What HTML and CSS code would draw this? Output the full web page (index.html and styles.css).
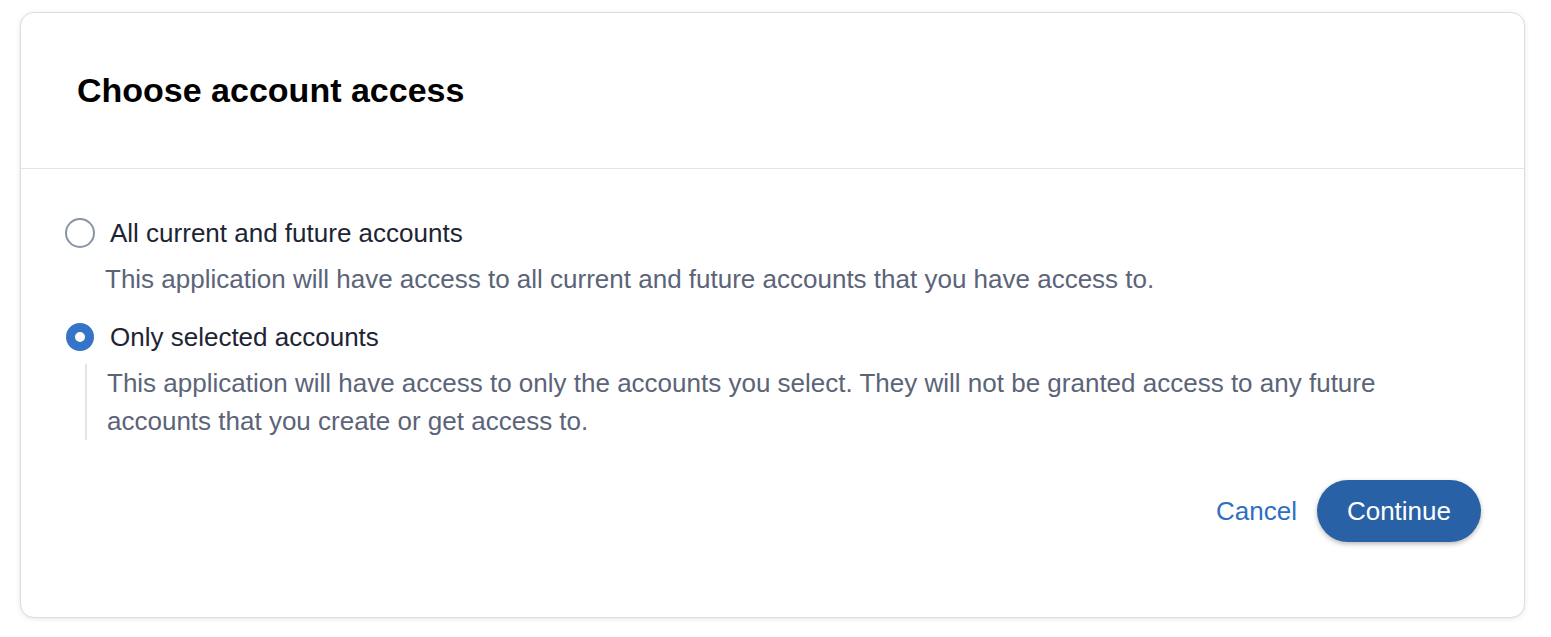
FILE: index.html
```html
<!DOCTYPE html>
<html lang="en">
<head>
<meta charset="utf-8">
<title>Choose account access</title>
<link rel="stylesheet" href="styles.css">
</head>
<body>
<div class="page">
  <div class="card">
    <div class="card-header">
      <h1 class="title">Choose account access</h1>
    </div>
    <div class="card-body">
      <div class="options">
        <div class="option">
          <label class="option-label">
            <span class="radio"></span>
            <span class="label-text">All current and future accounts</span>
          </label>
          <div class="desc">This application will have access to all current and future accounts that you have access to.</div>
        </div>
        <div class="option">
          <label class="option-label">
            <span class="radio checked"></span>
            <span class="label-text">Only selected accounts</span>
          </label>
          <div class="desc desc-active">This application will have access to only the accounts you select. They will not be granted access to any future accounts that you create or get access to.</div>
        </div>
      </div>
      <div class="actions">
        <button class="btn-link" type="button">Cancel</button>
        <button class="btn-primary" type="button">Continue</button>
      </div>
    </div>
  </div>
</div>
</body>
</html>
```

FILE: styles.css
```css
* { box-sizing: border-box; }
html, body {
  margin: 0;
  padding: 0;
  background: #ffffff;
  font-family: "Liberation Sans", Arial, Helvetica, sans-serif;
}
.page {
  padding: 12px 26px 20px 20px;
}
.card {
  border: 1px solid #dddde0;
  border-radius: 14px;
  box-shadow: 0 1px 5px rgba(0, 0, 0, 0.10);
  background: #fff;
  height: 606px;
  display: flex;
  flex-direction: column;
}
.card-header {
  height: 156px;
  border-bottom: 1px solid #e4e4e8;
  display: flex;
  align-items: center;
  padding-left: 56px;
}
.title {
  margin: 0;
  font-size: 34px;
  font-weight: 700;
  color: #000;
}
.card-body {
  padding: 45px 43px 0 44px;
  display: flex;
  flex-direction: column;
}
.options {
  display: flex;
  flex-direction: column;
  gap: 20px;
}
.option {
  display: flex;
  flex-direction: column;
  gap: 8px;
}
.option-label {
  display: flex;
  align-items: center;
  gap: 15px;
  height: 38px;
}
.radio {
  width: 30px;
  height: 30px;
  border-radius: 50%;
  border: 2px solid #8a93a6;
  background: #fff;
  flex: none;
}
.radio.checked {
  width: 28px;
  height: 28px;
  margin: 0 1px;
  border: 9px solid #3574c6;
}
.label-text {
  font-size: 26px;
  line-height: 38px;
  color: #1d2433;
}
.desc {
  margin-left: 20px;
  padding-left: 20px;
  font-size: 26px;
  line-height: 38px;
  color: #5b6478;
  max-width: 1320px;
}
.desc-active {
  padding-left: 20px;
  border-left: 2px solid #e3e3e6;
}
.actions {
  display: flex;
  justify-content: flex-end;
  align-items: center;
  gap: 20px;
  margin-top: 40px;
}
.btn-link {
  background: none;
  border: none;
  padding: 0;
  font-family: inherit;
  font-size: 26px;
  color: #2f6fc1;
  cursor: pointer;
}
.btn-primary {
  height: 62px;
  padding: 0 30px;
  border: none;
  border-radius: 31px;
  background: #2961a6;
  color: #fff;
  font-family: inherit;
  font-size: 26px;
  box-shadow: 0 2px 5px rgba(0, 0, 0, 0.28);
  cursor: pointer;
}
```
